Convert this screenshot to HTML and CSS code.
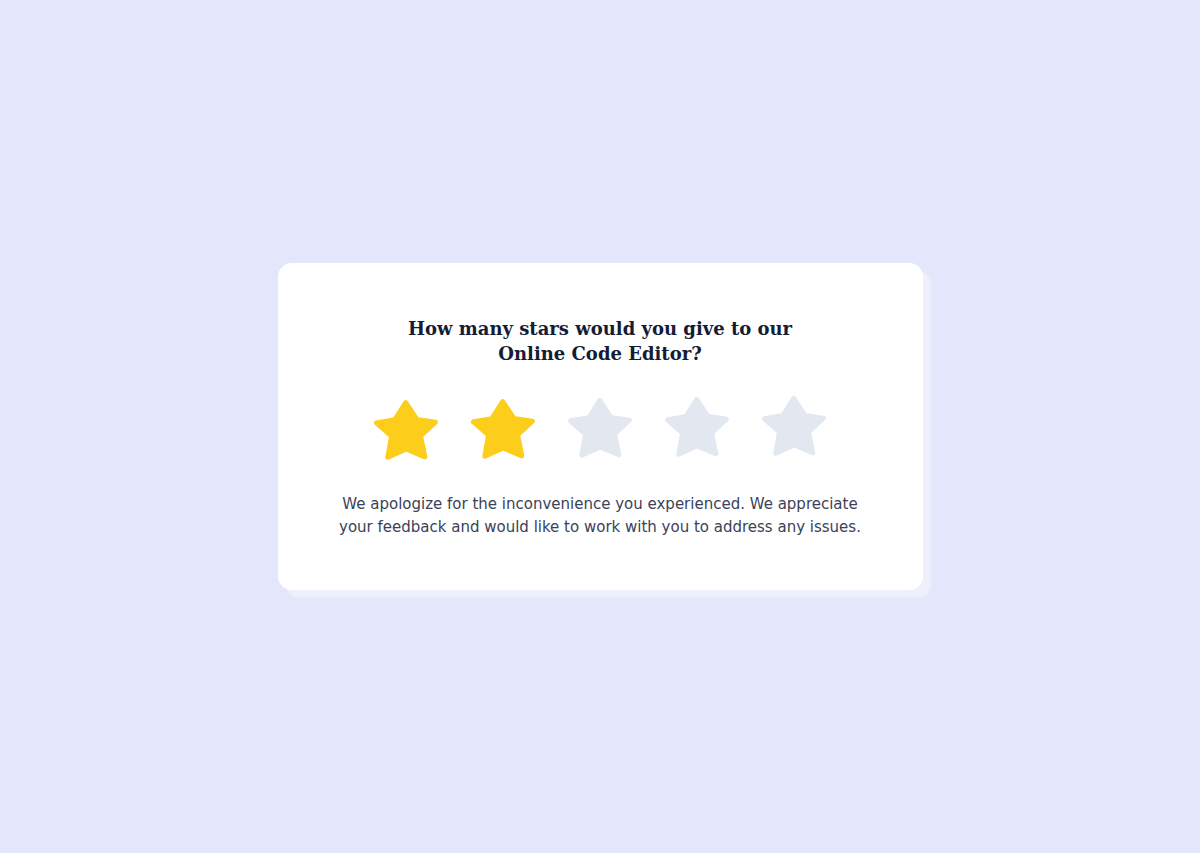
FILE: index.html
```html
<!DOCTYPE html>
<html lang="en">
<head>
    <meta charset="UTF-8">
    <meta name="viewport" content="width=device-width, initial-scale=1.0">
    <title>Rate the editor</title>
    <link rel="stylesheet" href="styles.css">
</head>
<body>
<div class="rating-card">
    <h1 class="rating-title">
        How many stars would you give to our<br>
        Online Code Editor?
    </h1>

    <div class="stars">
        <svg class="star star-active" viewBox="0 0 66 64"><path d="M33 4.5 L44 21.5 L62.5 24.5 L47.5 38 L51.5 59 L33 51 L14.5 59 L18.5 38 L3.5 24.5 L22 21.5 Z"/></svg>
        <svg class="star star-active" viewBox="0 0 66 64"><path d="M33 4.5 L44 21.5 L62.5 24.5 L47.5 38 L51.5 59 L33 51 L14.5 59 L18.5 38 L3.5 24.5 L22 21.5 Z"/></svg>
        <svg class="star" viewBox="0 0 66 64"><path d="M33 4.5 L44 21.5 L62.5 24.5 L47.5 38 L51.5 59 L33 51 L14.5 59 L18.5 38 L3.5 24.5 L22 21.5 Z"/></svg>
        <svg class="star" viewBox="0 0 66 64"><path d="M33 4.5 L44 21.5 L62.5 24.5 L47.5 38 L51.5 59 L33 51 L14.5 59 L18.5 38 L3.5 24.5 L22 21.5 Z"/></svg>
        <svg class="star" viewBox="0 0 66 64"><path d="M33 4.5 L44 21.5 L62.5 24.5 L47.5 38 L51.5 59 L33 51 L14.5 59 L18.5 38 L3.5 24.5 L22 21.5 Z"/></svg>
    </div>

    <p class="rating-text">
        We apologize for the inconvenience you experienced. We appreciate<br>
        your feedback and would like to work with you to address any issues.
    </p>
</div>
</body>
</html>
```

FILE: styles.css
```css
* {
    margin: 0;
    padding: 0;
    box-sizing: border-box;
}

body {
    font-family: 'DejaVu Sans', 'Open Sans', sans-serif;
    background: #e4e7fb;
    height: 100vh;
    display: flex;
    justify-content: center;
    align-items: center;
}

.rating-card {
    width: 645px;
    background: white;
    border-radius: 14px;
    box-shadow: 8px 8px 2px #eef0fc;
    padding: 53px 20px 51px;
    display: flex;
    flex-direction: column;
    align-items: center;
    text-align: center;
}

.rating-title {
    font-family: 'DejaVu Serif', 'Liberation Serif', serif;
    font-size: 18px;
    font-weight: bold;
    line-height: 25px;
    color: #141c36;
}

.stars {
    display: flex;
    gap: 31px;
    margin-top: 30px;
    transform: rotate(-0.6deg);
}

.star {
    width: 66px;
    height: 64px;
}

.star path {
    fill: #e2e7f0;
    stroke: #e2e7f0;
    stroke-width: 5;
    stroke-linejoin: round;
}

.star-active path {
    fill: #fccd1b;
    stroke: #fccd1b;
}

.rating-text {
    margin-top: 33px;
    font-size: 15px;
    line-height: 23px;
    color: #3a4257;
}
```
